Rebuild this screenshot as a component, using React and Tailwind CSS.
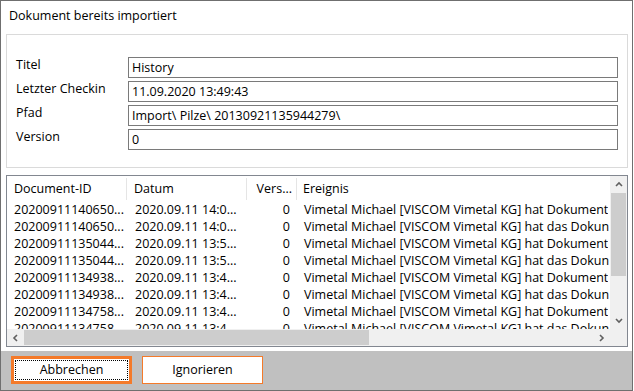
import React from 'react';

const rows = [
  ['20200911140650...', '2020.09.11 14:0...', '0', 'Vimetal Michael [VISCOM Vimetal KG] hat Dokument'],
  ['20200911140650...', '2020.09.11 14:0...', '0', 'Vimetal Michael [VISCOM Vimetal KG] hat das Dokun'],
  ['20200911135044...', '2020.09.11 13:5...', '0', 'Vimetal Michael [VISCOM Vimetal KG] hat Dokument'],
  ['20200911135044...', '2020.09.11 13:5...', '0', 'Vimetal Michael [VISCOM Vimetal KG] hat das Dokun'],
  ['20200911134938...', '2020.09.11 13:4...', '0', 'Vimetal Michael [VISCOM Vimetal KG] hat Dokument'],
  ['20200911134938...', '2020.09.11 13:4...', '0', 'Vimetal Michael [VISCOM Vimetal KG] hat das Dokun'],
  ['20200911134758...', '2020.09.11 13:4...', '0', 'Vimetal Michael [VISCOM Vimetal KG] hat Dokument'],
  ['20200911134758...', '2020.09.11 13:4...', '0', 'Vimetal Michael [VISCOM Vimetal KG] hat das Dokun'],
];

const fields = [
  ['Titel', 'History'],
  ['Letzter Checkin', '11.09.2020 13:49:43'],
  ['Pfad', 'Import\\ Pilze\\ 20130921135944279\\'],
  ['Version', '0'],
];

const Chevron = ({ dir }) => {
  const pts = {
    up: '1,5 4,2 7,5',
    down: '1,2 4,5 7,2',
    left: '5,1 2,4 5,7',
    right: '2,1 5,4 2,7',
  }[dir];
  return (
    <svg width="8" height="8" viewBox="0 0 8 8">
      <polyline points={pts} fill="none" stroke="#606060" strokeWidth="1.6" />
    </svg>
  );
};

export default function App() {
  return (
    <div
      className="w-[633px] h-[391px] border border-[#6f6f6f] bg-white flex flex-col text-[12.5px] text-black"
      style={{ fontFamily: '"Open Sans", "Noto Sans", sans-serif' }}
    >
      <div className="h-[33px] shrink-0 pl-[8px] pt-[6px]">Dokument bereits importiert</div>

      <div className="ml-[5px] mr-[4px] h-[134px] shrink-0 border border-[#dadada] pt-[22px] pl-[9px]">
        {fields.map(([label, value]) => (
          <div key={label} className="flex mb-[3px]">
            <div className="w-[112px] leading-[16px]">{label}</div>
            <div className="w-[490px] h-[21px] border border-[#7a7a7a] pl-[3px] leading-[19px] whitespace-nowrap overflow-hidden">
              {value}
            </div>
          </div>
        ))}
      </div>

      <div className="ml-[5px] mr-[4px] mt-[7px] h-[172px] shrink-0 border border-[#828790] flex flex-col">
        <div className="flex flex-1 min-h-0">
          <div className="flex-1 overflow-hidden">
            <div className="flex h-[25px] items-center whitespace-nowrap">
              <div className="w-[120px] pl-[7px] border-r border-[#e5e5e5] h-[22px] leading-[22px]">Document-ID</div>
              <div className="w-[120px] pl-[7px] border-r border-[#e5e5e5] h-[22px] leading-[22px]">Datum</div>
              <div className="w-[50px] pr-[4px] text-right border-r border-[#e5e5e5] h-[22px] leading-[22px]">Vers...</div>
              <div className="pl-[6px] h-[22px] leading-[22px]">Ereignis</div>
            </div>
            {rows.map((r, i) => (
              <div key={i} className="flex h-[17px] leading-[17px] whitespace-nowrap">
                <div className="w-[121px] pl-[7px] shrink-0">{r[0]}</div>
                <div className="w-[120px] pl-[7px] shrink-0">{r[1]}</div>
                <div className="w-[50px] pr-[8px] text-right shrink-0">{r[2]}</div>
                <div className="pl-[6px] overflow-hidden">{r[3]}</div>
              </div>
            ))}
          </div>
          <div className="w-[17px] bg-[#f0f0f0] flex flex-col">
            <div className="h-[17px] flex items-center justify-center">
              <Chevron dir="up" />
            </div>
            <div className="h-[83px] mx-[1px] bg-[#cdcdcd]" />
            <div className="flex-1" />
            <div className="h-[17px] flex items-center justify-center">
              <Chevron dir="down" />
            </div>
          </div>
        </div>
        <div className="h-[17px] flex bg-[#f0f0f0]">
          <div className="w-[17px] flex items-center justify-center">
            <Chevron dir="left" />
          </div>
          <div className="w-[345px] my-[1px] bg-[#cdcdcd]" />
          <div className="flex-1" />
          <div className="w-[17px] flex items-center justify-center">
            <Chevron dir="right" />
          </div>
          <div className="w-[17px]" />
        </div>
      </div>

      <div className="mt-[4px] flex-1 bg-[#c0c0c0] flex gap-[10px] pl-[10px] pt-[5px]">
        <button className="w-[121px] h-[28px] bg-white border-[3px] border-[#f47a2a] p-[1px]">
          <div className="h-full border border-dotted border-black flex items-center justify-center">Abbrechen</div>
        </button>
        <button className="w-[121px] h-[28px] bg-white border border-[#f47a2a] flex items-center justify-center">
          Ignorieren
        </button>
      </div>
    </div>
  );
}
